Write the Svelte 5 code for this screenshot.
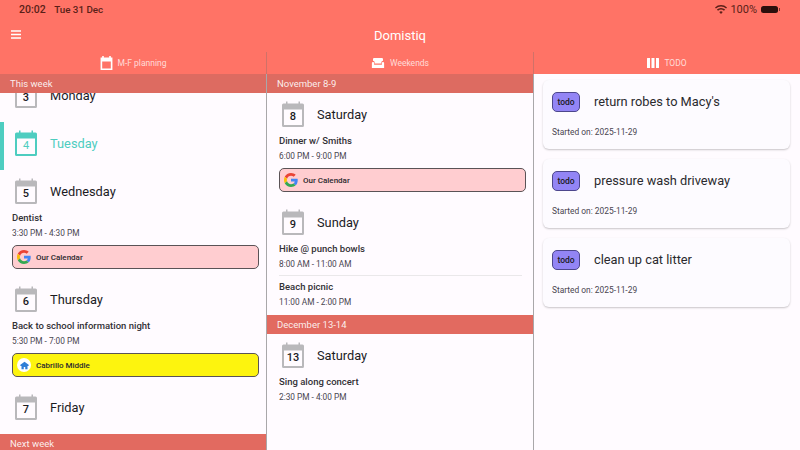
<script>
  const weekDays = [
    { num: 3, name: 'Monday' },
    { num: 4, name: 'Tuesday', today: true },
    { num: 5, name: 'Wednesday', events: [{ title: 'Dentist', time: '3:30 PM - 4:30 PM', chip: 'google' }] },
    { num: 6, name: 'Thursday', events: [{ title: 'Back to school information night', time: '5:30 PM - 7:00 PM', chip: 'school' }] },
    { num: 7, name: 'Friday' }
  ];

  const nov = [
    { num: 8, name: 'Saturday', events: [{ title: 'Dinner w/ Smiths', time: '6:00 PM - 9:00 PM', chip: 'google' }] },
    {
      num: 9,
      name: 'Sunday',
      events: [
        { title: 'Hike @ punch bowls', time: '8:00 AM - 11:00 AM' },
        { title: 'Beach picnic', time: '11:00 AM - 2:00 PM' }
      ]
    }
  ];

  const dec = [
    { num: 13, name: 'Saturday', events: [{ title: 'Sing along concert', time: '2:30 PM - 4:00 PM' }] }
  ];

  const todos = ['return robes to Macy\'s', 'pressure wash driveway', 'clean up cat litter'];
</script>

{#snippet day(d)}
  <div class="day" class:empty={!d.events} class:today={d.today}>
    <div class="day-row">
      <div class="cal">
        <svg viewBox="0 0 24 26" width="24" height="26">
          <path class="cal-shape" d="M2.500 2.500H5V.5h1.500v2h11v-2H19v2h2.500A1.500 1.500 0 0 1 23 4v20.500a1.500 1.500 0 0 1-1.500 1.500h-19A1.500 1.500 0 0 1 1 24.500V4a1.500 1.500 0 0 1 1.500-1.500z" />
          <rect x="3" y="8.500" width="18" height="15.500" fill="#fffbff" />
        </svg>
        <span class="cal-num">{d.num}</span>
      </div>
      <span class="day-name">{d.name}</span>
    </div>
    {#each d.events ?? [] as ev, i}
      {#if i > 0}<div class="divider"></div>{/if}
      <div class="ev-title">{ev.title}</div>
      <div class="ev-time">{ev.time}</div>
      {#if ev.chip === 'google'}
        <div class="chip pink">
          <svg viewBox="0 0 48 48" width="14" height="14">
            <path fill="#EA4335" d="M24 9.500c3.500 0 6.700 1.200 9.200 3.600l6.900-6.900C35.900 2.400 30.500 0 24 0 14.600 0 6.500 5.400 2.600 13.200l8 6.200C12.500 13.700 17.800 9.500 24 9.500z" />
            <path fill="#4285F4" d="M47 24.500c0-1.600-.1-3.100-.4-4.500H24v9h12.900c-.6 3-2.200 5.500-4.700 7.200l7.700 6C44.400 38 47 31.800 47 24.500z" />
            <path fill="#FBBC05" d="M10.500 28.600c-.5-1.500-.8-3-.8-4.600s.3-3.100.8-4.600l-8-6.200C.9 16.500 0 20.100 0 24s.9 7.500 2.600 10.800z" />
            <path fill="#34A853" d="M24 48c6.500 0 11.900-2.100 15.900-5.800l-7.700-6c-2.200 1.500-4.900 2.300-8.200 2.300-6.200 0-11.500-4.200-13.400-9.900l-8 6.200C6.500 42.600 14.600 48 24 48z" />
          </svg>
          <span>Our Calendar</span>
        </div>
      {:else if ev.chip === 'school'}
        <div class="chip yellow">
          <span class="school-badge">
            <svg viewBox="0 0 24 24" width="9" height="9">
              <path fill="#2f7fd6" d="M12 2 1 10v3h3v9h6v-6h4v6h6v-9h3v-3z" />
            </svg>
          </span>
          <span>Cabrillo Middle</span>
        </div>
      {/if}
    {/each}
  </div>
{/snippet}

<div class="page">
  <header class="top">
    <div class="status">
      <span class="clock">20:02</span>
      <span class="date">Tue 31 Dec</span>
      <span class="spacer"></span>
      <svg class="wifi" viewBox="0 0 24 18" width="12" height="9">
        <path fill="#5a1f18" d="M12 18 8.500 14a5 5 0 0 1 7 0zM6 11.500 3.800 9a12 12 0 0 1 16.400 0L18 11.500a9 9 0 0 0-12 0zM1.800 7 0 4.800a18 18 0 0 1 24 0L22.200 7a15 15 0 0 0-20.400 0z" />
      </svg>
      <span class="pct">100%</span>
      <span class="battery"></span>
    </div>
    <div class="appbar">
      <svg class="menu" viewBox="0 0 12 9" width="12" height="9">
        <path fill="none" stroke="#fff" stroke-width="1.300" d="M1 1h10M1 4.500h10M1 8h10" />
      </svg>
      <span class="title">Domistiq</span>
    </div>
    <nav class="tabs">
      <div class="tab">
        <svg viewBox="0 0 24 26" width="13" height="14">
          <path fill="#fff" d="M1 3h3V0h3v3h10V0h3v3h3v23H1zm3 7v13h16V10z" />
        </svg>
        <span>M-F planning</span>
      </div>
      <div class="tab">
        <svg viewBox="0 0 24 18" width="14" height="10">
          <path fill="#fff" d="M5 0h14a2 2 0 0 1 2 2v3a3 3 0 0 0-3 3v2H6V8a3 3 0 0 0-3-3V2a2 2 0 0 1 2-2zM3 7a2 2 0 0 1 2 2v3h14V9a2 2 0 0 1 4 0v9H1V9a2 2 0 0 1 2-2z" />
        </svg>
        <span>Weekends</span>
      </div>
      <div class="tab">
        <svg viewBox="0 0 12 10" width="12" height="10">
          <path fill="#fff" d="M.5 0H3v10H.5a.5.5 0 0 1-.5-.5v-9A.5.5 0 0 1 .5 0zM4.500 0h3v10h-3zM9 0h2.500a.5.5 0 0 1 .5.5v9a.5.5 0 0 1-.5.5H9z" />
        </svg>
        <span>TODO</span>
      </div>
    </nav>
  </header>

  <main class="columns">
    <section class="col">
      <div class="band top-band">This week</div>
      <div class="scroll">
        <div class="scroll-inner">
          {#each weekDays as d}
            {@render day(d)}
          {/each}
        </div>
      </div>
      <div class="band last">Next week</div>
    </section>

    <section class="col">
      <div class="band top-band">November 8-9</div>
      {#each nov as d}
        {@render day(d)}
      {/each}
      <div class="band">December 13-14</div>
      {#each dec as d}
        {@render day(d)}
      {/each}
    </section>

    <section class="col todo">
      {#each todos as t}
        <article class="card">
          <div class="card-head">
            <span class="todo-chip">todo</span>
            <span class="card-title">{t}</span>
          </div>
          <div class="started">Started on: 2025-11-29</div>
        </article>
      {/each}
    </section>
  </main>
</div>

<style>
  :global(body) {
    margin: 0;
    background: #fffbff;
    font-family: Roboto, 'Liberation Sans', sans-serif;
  }

  .page {
    width: 800px;
    height: 450px;
    display: flex;
    flex-direction: column;
    overflow: hidden;
  }

  .top {
    background: #ff7366;
    height: 74px;
    flex: none;
    display: flex;
    flex-direction: column;
  }

  .status {
    height: 18px;
    padding: 0 22px 0 19px;
    display: flex;
    align-items: center;
    font-size: 10.500px;
    font-weight: 500;
    color: #5a1f18;
  }

  .clock {
    margin-right: 8.500px;
  }

  .date {
    font-size: 9.800px;
  }

  .spacer {
    flex: 1;
  }

  .wifi {
    margin-right: 3px;
  }

  .pct {
    margin-right: 4px;
    font-size: 11px;
    font-weight: 400;
  }

  .battery {
    width: 17px;
    height: 7px;
    border-radius: 2.500px;
    background: #2a0f0c;
    position: relative;
  }

  .battery::after {
    content: '';
    position: absolute;
    right: -2px;
    top: 2px;
    width: 1px;
    height: 3px;
    background: #7a3a32;
  }

  .appbar {
    height: 34px;
    display: flex;
    align-items: center;
    justify-content: center;
    position: relative;
  }

  .menu {
    position: absolute;
    left: 10px;
    top: 12px;
  }

  .title {
    color: #fff;
    font-size: 13px;
  }

  .tabs {
    height: 22px;
    display: grid;
    grid-template-columns: 267px 267px 266px;
  }

  .tab {
    display: flex;
    align-items: center;
    justify-content: center;
    gap: 5px;
    color: rgba(255, 255, 255, 0.75);
    font-size: 8.500px;
    border-right: 1px solid rgba(120, 110, 110, 0.35);
  }

  .tab:last-child {
    border-right: none;
  }

  .columns {
    flex: 1;
    display: grid;
    grid-template-columns: 267px 267px 266px;
    min-height: 0;
  }

  .col {
    border-right: 1px solid #a9a7aa;
    display: flex;
    flex-direction: column;
    min-height: 0;
    overflow: hidden;
    background: #fffbff;
  }

  .col.todo {
    border-right: none;
    padding: 6px 10px 0 9px;
    gap: 10px;
  }

  .band {
    flex: none;
    height: 19px;
    line-height: 19px;
    padding-left: 10px;
    background: #e26a60;
    color: rgba(255, 255, 255, 0.9);
    font-size: 9.500px;
  }

  .band.top-band {
    background: #dd6b61;
  }

  .band.last {
    height: 16px;
  }

  .scroll {
    flex: 1;
    overflow: hidden;
  }

  .scroll-inner {
    margin-top: -19px;
  }

  .day {
    padding: 0 7px 5px 12px;
    position: relative;
  }

  .day.empty {
    padding-bottom: 10px;
  }

  .day.today::before {
    content: '';
    position: absolute;
    left: 0;
    top: 0;
    bottom: 0;
    width: 4px;
    background: #4ecdc0;
  }

  .day-row {
    height: 38px;
    padding-top: 8px;
    box-sizing: border-box;
    display: flex;
    align-items: flex-start;
    gap: 12px;
  }

  .cal {
    position: relative;
    width: 24px;
    height: 26px;
    flex: none;
    margin-left: 2px;
  }

  .cal-shape {
    fill: #b9b8bb;
  }

  .today .cal-shape {
    fill: #4ecdc0;
  }

  .cal-num {
    position: absolute;
    left: 0;
    right: 0;
    top: 8px;
    height: 15px;
    line-height: 15px;
    text-align: center;
    font-size: 11px;
    font-weight: 500;
    color: #1c1b1f;
  }

  .today .cal-num,
  .today .day-name {
    color: #4ecdc0;
  }

  .today .cal-num {
    font-weight: 400;
  }

  .day-name {
    font-size: 12.800px;
    line-height: 28px;
    color: #1c1b1f;
  }

  .ev-title {
    margin-top: 2px;
    height: 15px;
    line-height: 15px;
    font-size: 9.500px;
    font-weight: 500;
    color: #333136;
  }

  .ev-time {
    height: 16px;
    line-height: 16px;
    font-size: 8.300px;
    color: #49454f;
  }

  .divider {
    height: 1px;
    margin: 3px 4px 3px 0;
    background: #eae8ea;
  }

  .divider + .ev-title {
    margin-top: 0;
  }

  .chip {
    margin-top: 4px;
    margin-bottom: 4px;
    height: 24px;
    box-sizing: border-box;
    border: 1px solid #5a5356;
    border-radius: 5px;
    display: flex;
    align-items: center;
    gap: 5px;
    padding-left: 4px;
    font-size: 8px;
    font-weight: 500;
    color: #2b2a2e;
  }

  .pink {
    background: #ffcdd0;
  }

  .yellow {
    background: #fdf40e;
  }

  .school-badge {
    width: 14px;
    height: 14px;
    border-radius: 50%;
    background: #fff;
    display: flex;
    align-items: center;
    justify-content: center;
    flex: none;
  }

  .card {
    height: 69px;
    flex: none;
    box-sizing: border-box;
    padding: 12px 9px 0;
    border-radius: 6px;
    background: #fdfbff;
    box-shadow: 0 1px 2px rgba(0, 0, 0, 0.22);
  }

  .card-head {
    display: flex;
    align-items: center;
    gap: 14px;
    height: 20px;
  }

  .todo-chip {
    width: 28px;
    height: 20px;
    box-sizing: border-box;
    border: 1px solid #4d478c;
    border-radius: 5px;
    background: #9385f5;
    font-size: 8.500px;
    font-weight: 500;
    text-align: center;
    line-height: 18px;
    color: #1c1b1f;
  }

  .card-title {
    font-size: 12.800px;
    color: #2b2a2e;
    margin-bottom: 2px;
  }

  .started {
    margin-top: 15px;
    font-size: 8.400px;
    color: #49454f;
  }
</style>
